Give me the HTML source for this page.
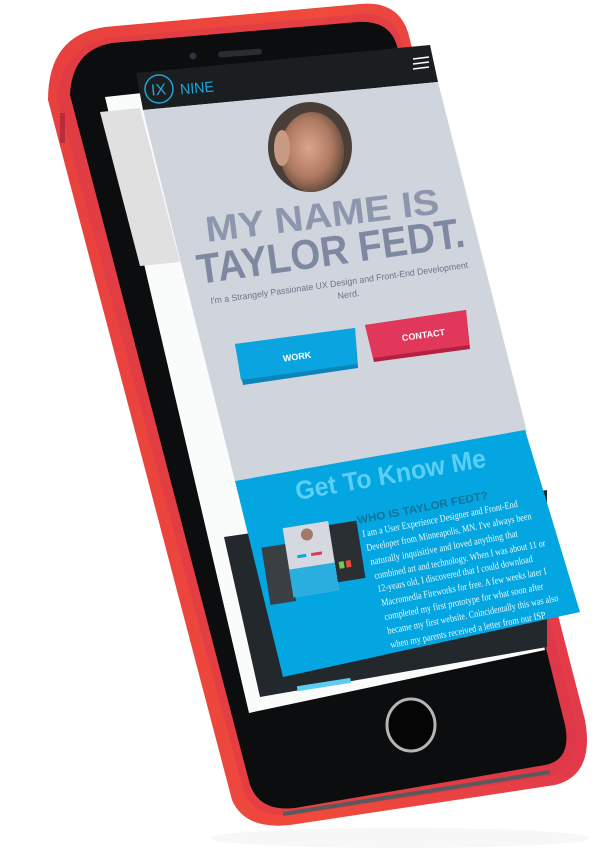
<!DOCTYPE html>
<html><head><meta charset="utf-8"><style>
html,body{margin:0;padding:0;background:#fff;width:600px;height:863px;overflow:hidden}
svg{display:block}
</style></head><body>
<svg width="600" height="863" viewBox="0 0 600 863" xmlns="http://www.w3.org/2000/svg">
<defs>
<linearGradient id="red" x1="0" y1="0" x2="1" y2="0">
<stop offset="0" stop-color="#e8403e"/><stop offset="0.5" stop-color="#f04a3c"/><stop offset="1" stop-color="#e23a4a"/>
</linearGradient>
<radialGradient id="face" cx="0.45" cy="0.45" r="0.6">
<stop offset="0" stop-color="#d9a58c"/><stop offset="0.6" stop-color="#b07a62"/><stop offset="1" stop-color="#5a4638"/>
</radialGradient>
</defs>
<ellipse cx="400" cy="838" rx="190" ry="10" fill="#f7f7f7"/>
<!-- red case -->
<path d="M48,100 Q48,35 105,27 L360,4 Q402,0 410,40 L585,720 Q595,775 555,785 L290,825 Q245,830 232,800 Z" fill="url(#red)"/>
<path d="M58,100 Q60,48 108,38 L360,14 Q395,12 402,44 L575,722 Q582,765 550,776 L292,815 Q255,818 244,792 Z" fill="#d9364a" opacity="0.5"/>
<rect x="60" y="113" width="5" height="30" fill="#b82c3c"/>
<!-- black bezel -->
<path d="M70,95 Q72,50 112,43 L358,22 Q392,20 398,50 L565,725 Q572,760 545,765 L295,808 Q260,812 250,785 Z" fill="#0c0d0e"/>
<path d="M283,814 L550,772" stroke="#5a5a5c" stroke-width="4"/>
<!-- speaker & camera -->
<rect x="218" y="50" width="44" height="6" rx="3" fill="#2a2c2e" transform="rotate(-4 240 53)"/>
<circle cx="193" cy="56" r="3.5" fill="#2b3440"/>
<!-- home button -->
<ellipse cx="411" cy="725" rx="24" ry="26" fill="#050505" stroke="#b5b5b5" stroke-width="3"/>
<!-- white screen -->
<path d="M105,97 L430,62 L545,650 L249,713 Z" fill="#fafbfb"/>
<path d="M100,112 L140,108 L180,262 L140,266 Z" fill="#e0e0e0"/>
<!-- dark inner panel -->
<path d="M224,537 L547,490 L547,647 L260,697 Z" fill="#22282b"/>
<rect x="297" y="682" width="54" height="5" fill="#5bcdf5" transform="rotate(-9 324 685)"/>
<!-- header -->
<path d="M136,73 L430,45 L438,82 L143,110 Z" fill="#1b1e20"/>
<circle cx="159" cy="89" r="14" fill="none" stroke="#1ea6d6" stroke-width="1.5"/>
<text x="151" y="95" font-family="Liberation Sans, sans-serif" font-size="16" fill="#1ea6d6" transform="rotate(-5 159 89)">IX</text>
<text x="180" y="93" font-family="Liberation Sans, sans-serif" font-size="15" fill="#1ea6d6" textLength="34" lengthAdjust="spacingAndGlyphs" transform="rotate(-5 197 88)">NINE</text>
<g stroke="#fff" stroke-width="1.6"><line x1="413" y1="59" x2="429" y2="57"/><line x1="413" y1="64" x2="429" y2="62"/><line x1="413" y1="69" x2="429" y2="67"/></g>
<!-- grey page -->
<path d="M143,110 L438,82 L527,432 L235,481 Z" fill="#d0d4dd"/>
<!-- avatar -->
<ellipse cx="310" cy="147" rx="42" ry="45" fill="#4a3f38"/>
<ellipse cx="312" cy="152" rx="32" ry="40" fill="url(#face)"/>
<ellipse cx="282" cy="148" rx="8" ry="18" fill="#c89a84"/>
<!-- heading -->
<g font-family="Liberation Sans, sans-serif" font-weight="bold" fill="#8c96ac">
<text x="207" y="242" font-size="36" textLength="235" lengthAdjust="spacingAndGlyphs" transform="rotate(-7 207 242)">MY NAME IS</text>
<text x="199" y="284" font-size="42" fill="#7e89a1" textLength="270" lengthAdjust="spacingAndGlyphs" transform="rotate(-8 199 284)">TAYLOR FEDT.</text>
</g>
<g font-family="Liberation Sans, sans-serif" font-size="9" fill="#6c7488">
<text x="211" y="304" textLength="260" lengthAdjust="spacingAndGlyphs" transform="rotate(-8 211 304)">I'm a Strangely Passionate UX Design and Front-End Development</text>
<text x="338" y="299" transform="rotate(-8 338 299)">Nerd.</text>
</g>
<!-- buttons -->
<path d="M235,344 L355,328 L358,368 L243,385 Z" fill="#0b84b8"/>
<path d="M235,344 L355,328 L357,364 L241,380 Z" fill="#0aa5e0"/>
<text x="283" y="360" font-family="Liberation Sans, sans-serif" font-weight="bold" font-size="9" fill="#fff" transform="rotate(-8 295 358)">WORK</text>
<path d="M365,325 L466,310 L470,349 L374,362 Z" fill="#b4203f"/>
<path d="M365,325 L466,310 L469,345 L373,358 Z" fill="#e0375b"/>
<text x="402" y="339" font-family="Liberation Sans, sans-serif" font-weight="bold" font-size="9" fill="#fff" transform="rotate(-8 417 337)">CONTACT</text>
<!-- blue section -->
<path d="M235,481 L525,430 L580,612 L283,677 Z" fill="#03a6e0"/>
<text x="297" y="500" font-family="Liberation Sans, sans-serif" font-weight="bold" font-size="26" fill="#5ccff6" textLength="193" lengthAdjust="spacingAndGlyphs" transform="rotate(-10 297 500)">Get To Know Me</text>
<text x="358" y="524" font-family="Liberation Sans, sans-serif" font-weight="bold" font-size="11" fill="#17709a" textLength="133" lengthAdjust="spacingAndGlyphs" transform="rotate(-11 358 524)">WHO IS TAYLOR FEDT?</text>
<!-- thumbnail -->
<g transform="rotate(-9 312 560)">
<rect x="264" y="540" width="26" height="58" fill="#3a3f44"/>
<rect x="334" y="528" width="28" height="58" fill="#2a2f33"/>
<rect x="288" y="524" width="46" height="70" fill="#d5d8de"/>
<rect x="288" y="566" width="46" height="28" fill="#2aaee0"/>
<circle cx="311" cy="534" r="6" fill="#a27866"/>
<rect x="298" y="553" width="9" height="3" fill="#0aa5e0"/><rect x="312" y="553" width="11" height="3" fill="#e0375b"/>
<rect x="338" y="566" width="5" height="7" fill="#6fcf4b"/><rect x="345" y="566" width="5" height="7" fill="#e64c3c"/>
</g>
<g font-family="Liberation Serif, serif" font-size="10" fill="#eaf7fd">
<text x="363" y="537" textLength="158" lengthAdjust="spacingAndGlyphs" transform="rotate(-11 363 537)">I am a User Experience Designer and Front-End</text>
<text x="367" y="551" textLength="168" lengthAdjust="spacingAndGlyphs" transform="rotate(-11 367 551)">Developer from Minneapolis, MN. I've always been</text>
<text x="371" y="565" textLength="150" lengthAdjust="spacingAndGlyphs" transform="rotate(-11 371 565)">naturally inquisitive and loved anything that</text>
<text x="375" y="579" textLength="174" lengthAdjust="spacingAndGlyphs" transform="rotate(-11 375 579)">combined art and technology. When I was about 11 or</text>
<text x="378" y="592" textLength="158" lengthAdjust="spacingAndGlyphs" transform="rotate(-11 378 592)">12-years old, I discovered that I could download</text>
<text x="382" y="606" textLength="168" lengthAdjust="spacingAndGlyphs" transform="rotate(-11 382 606)">Macromedia Fireworks for free. A few weeks later I</text>
<text x="385" y="620" textLength="162" lengthAdjust="spacingAndGlyphs" transform="rotate(-11 385 620)">completed my first prototype for what soon after</text>
<text x="388" y="634" textLength="174" lengthAdjust="spacingAndGlyphs" transform="rotate(-11 388 634)">became my first website. Coincidentally this was also</text>
<text x="391" y="648" textLength="158" lengthAdjust="spacingAndGlyphs" transform="rotate(-11 391 648)">when my parents received a letter from our ISP</text>
</g>
</svg>
</body></html>
